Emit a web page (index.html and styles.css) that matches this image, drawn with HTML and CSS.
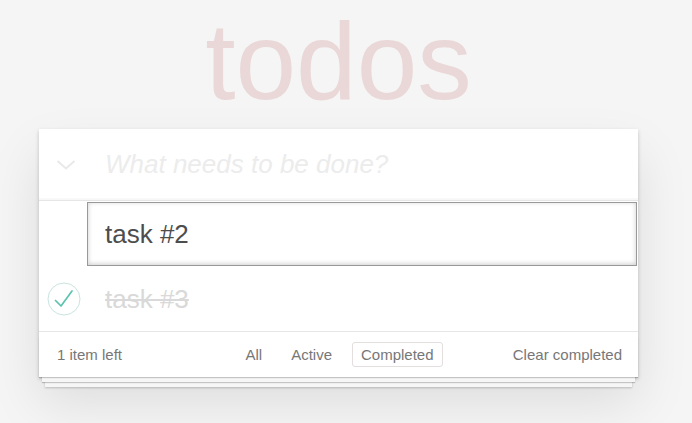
FILE: index.html
```html
<!DOCTYPE html>
<html lang="en">
<head>
<meta charset="utf-8">
<title>todos</title>
<link rel="stylesheet" href="styles.css">
</head>
<body>
<section class="todoapp">
  <h1 class="title">todos</h1>
  <div class="card">
    <header class="header">
      <span class="toggle-all">
        <svg width="20" height="12" viewBox="0 0 20 12"><polyline points="1.5,2 10,9.5 18.5,2" fill="none" stroke="#e9e9e9" stroke-width="2"/></svg>
      </span>
      <input class="new-todo" placeholder="What needs to be done?">
    </header>
    <ul class="todo-list">
      <li class="todo editing"><input class="edit" value="task #2"></li>
      <li class="todo completed">
        <span class="check">
          <svg width="34" height="34" viewBox="0 0 34 34"><circle cx="17" cy="17" r="16" fill="none" stroke="#c9e4df" stroke-width="1"/><polyline points="8.5,18.5 14,24 25,9" fill="none" stroke="#5dc2af" stroke-width="1.7" stroke-linecap="round" stroke-linejoin="round"/></svg>
        </span>
        <label class="label">task #3</label>
      </li>
    </ul>
    <footer class="footer">
      <span class="count">1 item left</span>
      <ul class="filters">
        <li><a class="filter">All</a></li>
        <li><a class="filter">Active</a></li>
        <li><a class="filter selected">Completed</a></li>
      </ul>
      <button class="clear">Clear completed</button>
    </footer>
  </div>
</section>
</body>
</html>
```

FILE: styles.css
```css
html, body {
  margin: 0;
  padding: 0;
}
body {
  background: #f5f5f5;
  font-family: "Liberation Sans", Arial, sans-serif;
  color: #4d4d4d;
  width: 692px;
  height: 423px;
  overflow: hidden;
}
.todoapp {
  margin-left: 39px;
  width: 599px;
}
.title {
  margin: 0;
  padding-top: 7px;
  height: 109px;
  font-size: 109px;
  line-height: 109px;
  font-weight: 400;
  text-align: center;
  color: rgba(175, 47, 47, 0.15);
}
.card {
  margin-top: 13px;
  background: #fff;
  box-shadow: 0 2px 4px rgba(0, 0, 0, 0.2), 0 25px 50px rgba(0, 0, 0, 0.1);
}
.header {
  display: flex;
  align-items: center;
  height: 71px;
  box-shadow: inset 0 -2px 1px rgba(0, 0, 0, 0.03);
}
.toggle-all {
  width: 66px;
  display: flex;
  padding-left: 17px;
  box-sizing: border-box;
}
.new-todo {
  flex: 1;
  border: none;
  outline: none;
  background: transparent;
  padding: 0;
  height: 71px;
  font-family: inherit;
  font-size: 26px;
  color: #4d4d4d;
}
.new-todo::placeholder {
  font-style: italic;
  color: #ececec;
}
.todo-list {
  list-style: none;
  margin: 0;
  padding: 0;
  border-top: 1px solid #e6e6e6;
}
.todo {
  display: flex;
  align-items: center;
}
.editing {
  padding: 1px 1px 1px 48px;
}
.edit {
  flex: 1;
  box-sizing: border-box;
  height: 64px;
  border: 1px solid #999;
  box-shadow: inset 0 -1px 5px 0 rgba(0, 0, 0, 0.2);
  padding: 0 16px 0 17px;
  font-family: inherit;
  font-size: 26px;
  color: #4d4d4d;
  outline: none;
  background: #fff;
}
.completed {
  height: 64px;
}
.check {
  width: 66px;
  display: flex;
  padding-left: 8px;
  box-sizing: border-box;
}
.label {
  font-size: 26px;
  color: #d9d9d9;
  text-decoration: line-through;
}
.footer {
  position: relative;
  display: grid;
  grid-template-columns: 1fr auto 1fr;
  align-items: center;
  height: 46px;
  box-sizing: border-box;
  border-top: 1px solid #e6e6e6;
  padding: 0 16px 0 18px;
  font-size: 15px;
  color: #777;
}
.footer::before {
  content: "";
  position: absolute;
  left: 0;
  right: 0;
  bottom: 0;
  height: 40px;
  box-shadow: 0 1px 1px rgba(0, 0, 0, 0.2),
    0 8px 0 -3px #f6f6f6,
    0 9px 1px -3px rgba(0, 0, 0, 0.2),
    0 16px 0 -6px #f6f6f6,
    0 17px 2px -6px rgba(0, 0, 0, 0.2);
}
.count {
  justify-self: start;
}
.filters {
  list-style: none;
  margin: 0;
  padding: 0;
  display: flex;
  gap: 11px;
}
.filter {
  display: block;
  padding: 3px 8px;
  line-height: 17px;
  border: 1px solid transparent;
  border-radius: 3px;
  color: #777;
}
.filter.selected {
  border-color: #e4dede;
}
.clear {
  justify-self: end;
  border: none;
  background: none;
  padding: 0;
  font-family: inherit;
  font-size: 15px;
  color: #777;
}
```
